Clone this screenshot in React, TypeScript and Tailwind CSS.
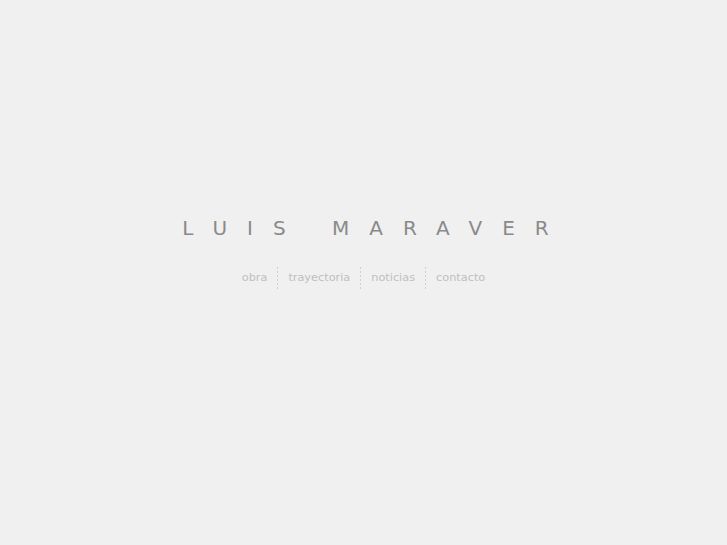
const links = ["obra", "trayectoria", "noticias", "contacto"];

export default function App() {
    return (
        <div
            className="w-full h-[545px] bg-[#f0f0f0] flex flex-col items-center"
            style={{ fontFamily: '"DejaVu Sans", sans-serif' }}
        >
            <h1 className="mt-[213px] pl-[24px] text-[20px] leading-[30px] tracking-[20px] text-[#8a8a8a] font-normal">
                LUIS MARAVER
            </h1>
            <nav className="mt-[24px] flex items-center text-[11.3px] text-[#bfbfbf]">
                {links.map((l, i) => (
                    <div key={l} className="flex items-center">
                        {i > 0 && (
                            <span className="w-px h-[22px] bg-[repeating-linear-gradient(to_bottom,#cfcfcf_0_2px,transparent_2px_4px)]" />
                        )}
                        <a href="#" className="px-[10px] leading-[22px]">{l}</a>
                    </div>
                ))}
            </nav>
        </div>
    );
}
